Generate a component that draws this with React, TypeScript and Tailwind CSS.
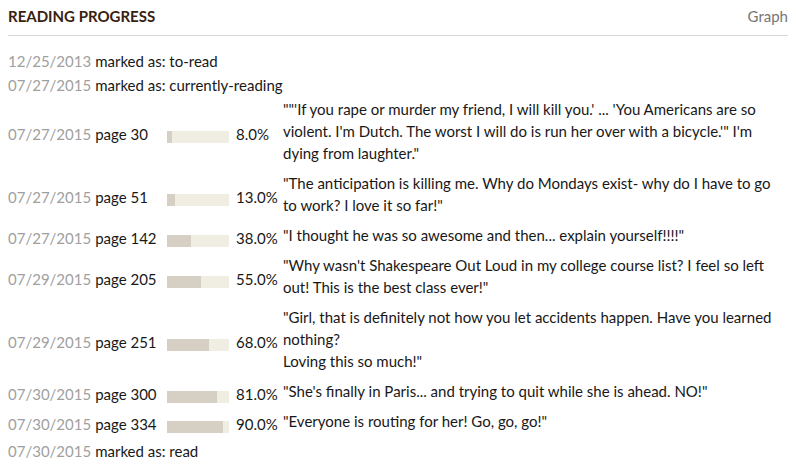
import React from 'react';

type Entry = {
    date: string;
    label: string;
    percent?: number;
    quote?: string;
}

const entries: Entry[] = [
    { date: '12/25/2013', label: 'marked as: to-read' },
    { date: '07/27/2015', label: 'marked as: currently-reading' },
    { date: '07/27/2015', label: 'page 30', percent: 8, quote: `""'If you rape or murder my friend, I will kill you.' ... 'You Americans are so violent. I'm Dutch. The worst I will do is run her over with a bicycle.'" I'm dying from laughter."` },
    { date: '07/27/2015', label: 'page 51', percent: 13, quote: '"The anticipation is killing me. Why do Mondays exist- why do I have to go to work? I love it so far!"' },
    { date: '07/27/2015', label: 'page 142', percent: 38, quote: '"I thought he was so awesome and then... explain yourself!!!!"' },
    { date: '07/29/2015', label: 'page 205', percent: 55, quote: `"Why wasn't Shakespeare Out Loud in my college course list? I feel so left out! This is the best class ever!"` },
    { date: '07/29/2015', label: 'page 251', percent: 68, quote: '"Girl, that is definitely not how you let accidents happen. Have you learned nothing?\nLoving this so much!"' },
    { date: '07/30/2015', label: 'page 300', percent: 81, quote: `"She's finally in Paris... and trying to quit while she is ahead. NO!"` },
    { date: '07/30/2015', label: 'page 334', percent: 90, quote: '"Everyone is routing for her! Go, go, go!"' },
    { date: '07/30/2015', label: 'marked as: read' },
];

const Row = ({ entry }: { entry: Entry }) => {
    if (entry.percent === undefined) {
        return (
            <div className="flex items-center h-[24px] leading-[22px]">
                <span className="text-[#a0a0a0]">{entry.date}</span>
                <span className="ml-[4px]">{entry.label}</span>
            </div>
        )
    }
    return (
        <div className="flex items-center">
            <div className="w-[159px] shrink-0">
                <span className="text-[#a0a0a0]">{entry.date}</span>
                <span className="ml-[4px]">{entry.label}</span>
            </div>
            <div className="w-[62px] h-[12px] shrink-0 bg-[#f0ede2] mt-[5px]">
                <div className="h-full bg-[#d6d0c4]" style={{ width: `${entry.percent}%` }}></div>
            </div>
            <div className="w-[54px] shrink-0 pl-[7px]">{entry.percent.toFixed(1)}%</div>
            <div className="flex-1 pt-[1px] pb-[7px] leading-[22px] whitespace-pre-line">{entry.quote}</div>
        </div>
    )
}

export default function App() {
    return (
        <div className="w-[796px] h-[472px] bg-white px-2 text-[15px] text-[#181818]" style={{ fontFamily: 'Lato, "Noto Sans", sans-serif' }}>
            <div className="flex justify-between items-center h-[36px] border-b border-[#d8d8d8] pb-[3px]">
                <div className="font-bold text-[#382110] uppercase">Reading Progress</div>
                <div className="text-[#767676]">Graph</div>
            </div>
            <div className="pt-[13px]">
                {entries.map((e, i) => (
                    <Row key={i} entry={e} />
                ))}
            </div>
        </div>
    )
}
